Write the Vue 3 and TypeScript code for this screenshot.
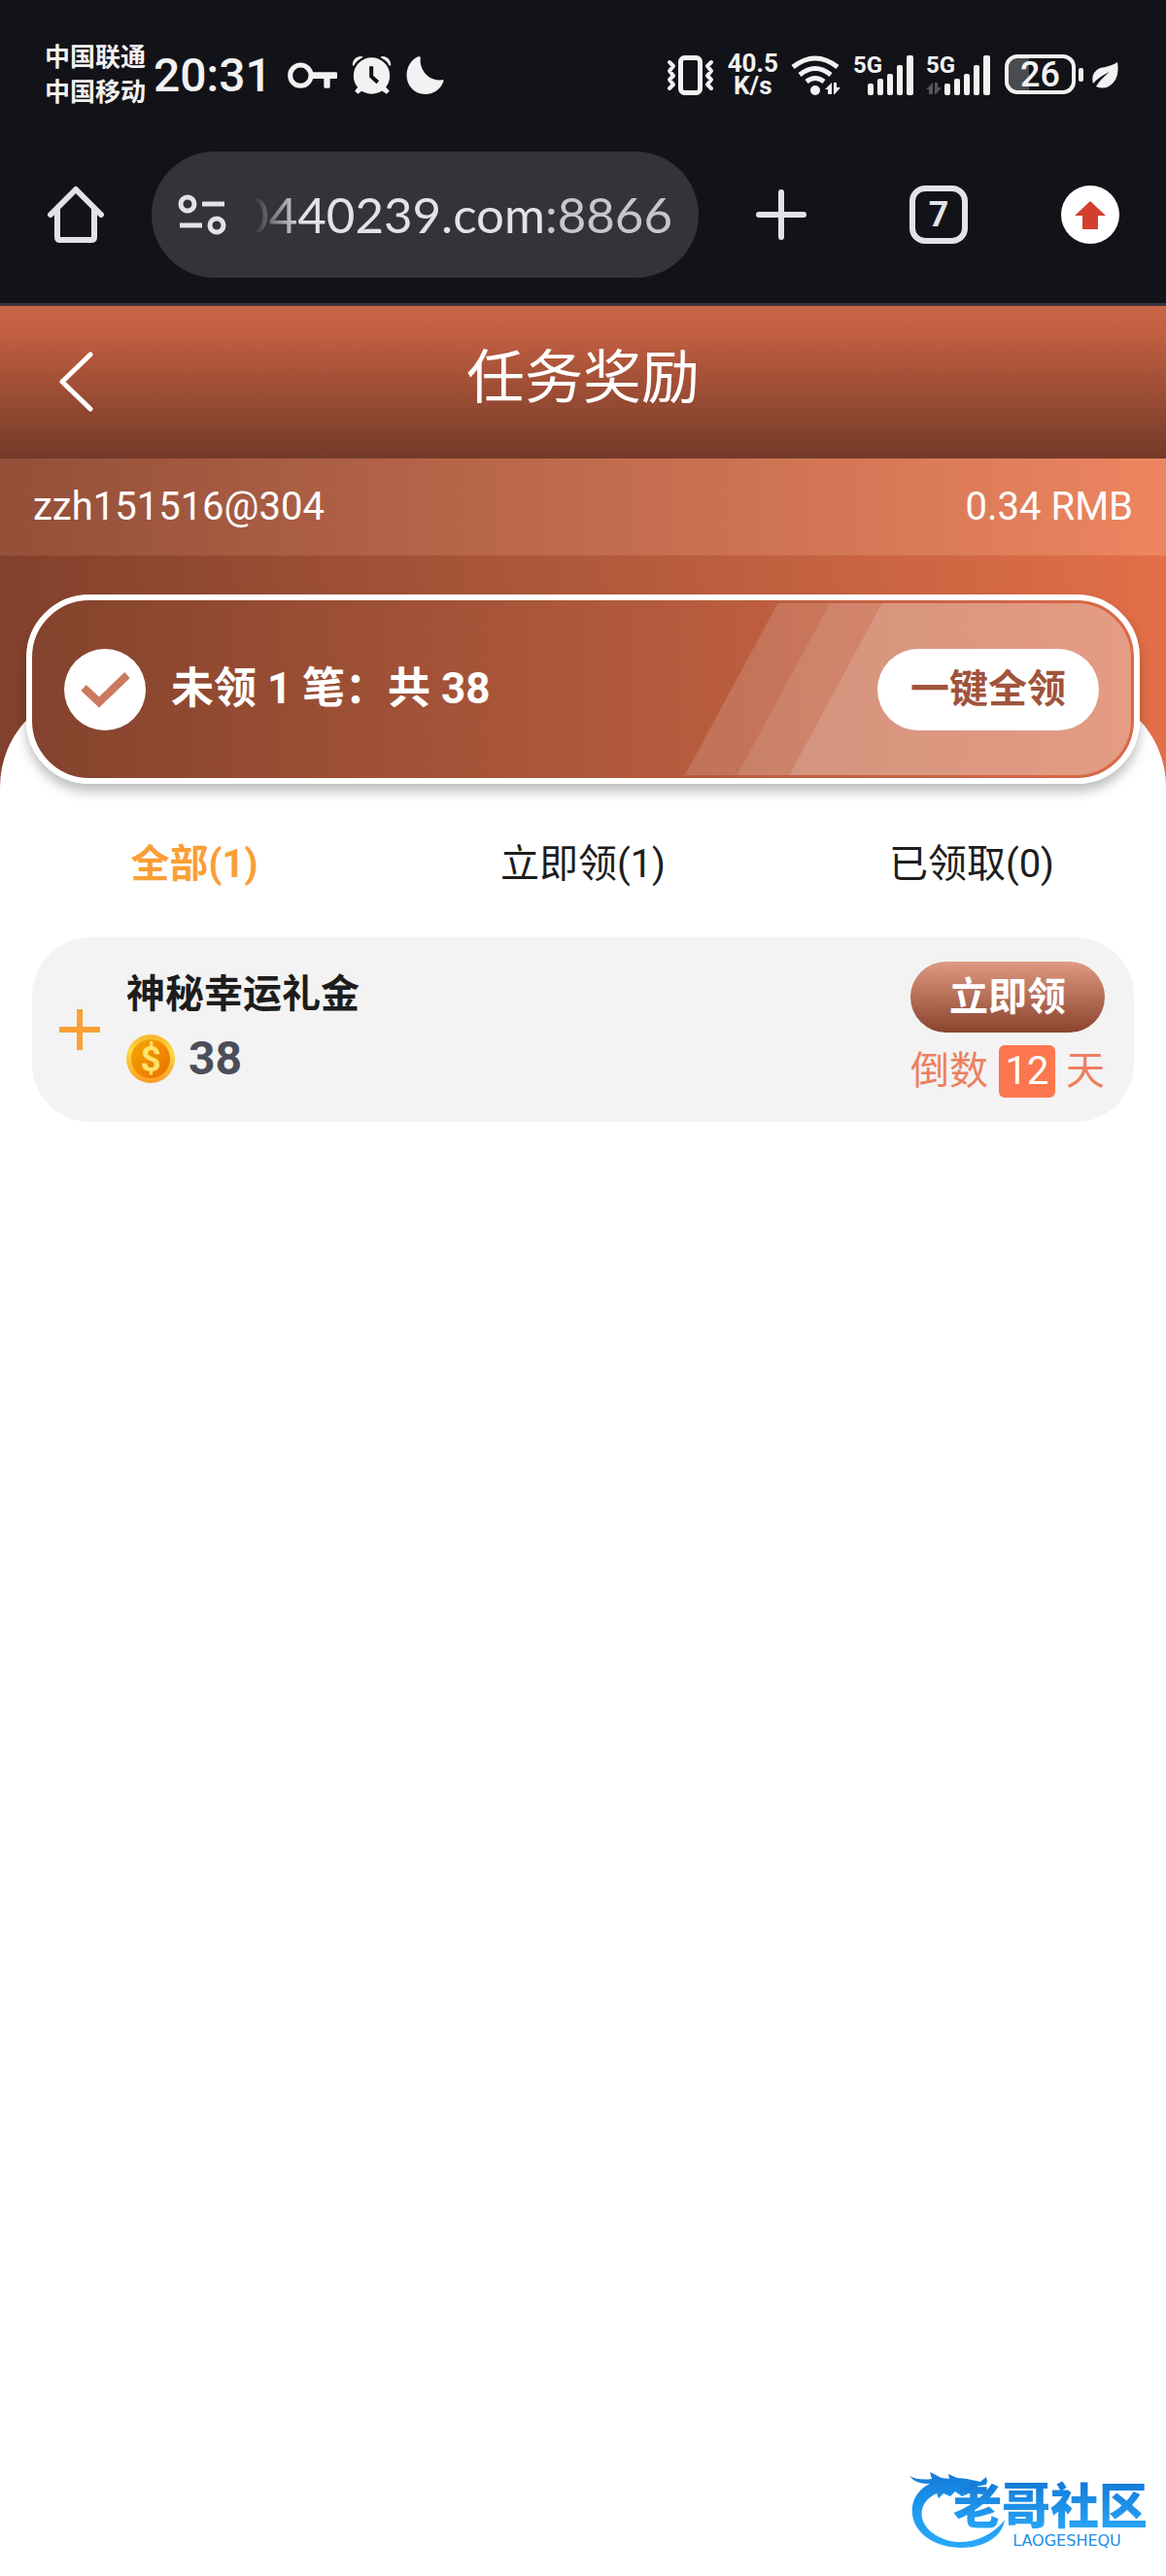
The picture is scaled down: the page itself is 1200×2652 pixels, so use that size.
<script setup lang="ts">
import { ref } from 'vue'

interface Tab {
  key: string
  label: string
  count: number
}

interface Reward {
  id: number
  title: string
  amount: number
  daysLeft: number
}

const tabs: Tab[] = [
  { key: 'all', label: '全部', count: 1 },
  { key: 'open', label: '立即领', count: 1 },
  { key: 'done', label: '已领取', count: 0 },
]
const rewards: Reward[] = [{ id: 1, title: '神秘幸运礼金', amount: 38, daysLeft: 12 }]
const active = ref('all')
</script>

<template>
  <div class="page">
    <header class="chrome">
      <div class="status">
        <div class="carriers">
          <span>中国联通</span>
          <span>中国移动</span>
        </div>
        <time class="clock">20:31</time>
        <svg class="key" width="51" height="27" viewBox="0 0 153 81" fill="currentColor">
          <circle cx="40" cy="41" r="32" fill="none" stroke="currentColor" stroke-width="15" />
          <path d="M76 31H150Q153 31 153 34V48Q153 51 150 51H131V76Q131 80 127 80H116Q112 80 112 76V51H76Z" />
        </svg>
        <svg class="alarm" width="41" height="40" viewBox="0 0 122 120">
          <g fill="currentColor">
            <path d="M2 30A25 25 0 0 1 33 4Q34 7 29 9Q13 17 6 32Q3 33 2 30Z" />
            <path d="M120 30A25 25 0 0 0 89 4Q88 7 93 9Q109 17 116 32Q119 33 120 30Z" />
            <circle cx="61" cy="63" r="56" />
            <path d="M22 92L36 105L19 119L9 110Z" />
            <path d="M100 92L86 105L107 119L116 110Z" />
          </g>
          <path d="M60 34V65L80 83" fill="none" stroke="#121318" stroke-width="12" />
        </svg>
        <svg class="moon" width="39" height="39" viewBox="0 0 117 118" fill="currentColor">
          <path d="M44 5C40 42 70 80 111 73Q118 72 115 80C106 103 84 118 58 118C26 118 1 92 1 60C1 32 16 10 37 1Q45 -1 44 5Z" />
        </svg>

        <div class="indicators">
          <svg width="50" height="41" viewBox="0 0 100 82" fill="none" stroke="currentColor" stroke-linejoin="round" stroke-linecap="round">
            <rect x="29" y="5" width="40" height="72" rx="8" stroke-width="10" />
            <path d="M6 14L14 22L6 32L14 42L6 50L14 60L6 68M92 14L84 22L92 32L84 42L92 50L84 60L92 68" stroke-width="8" />
          </svg>
          <div class="speed"><span>40.5</span><span>K/s</span></div>
          <svg width="51" height="41" viewBox="0 0 51 41">
            <g fill="none" stroke="currentColor" stroke-width="5">
              <path d="M2 12Q25 -6 48 12" />
              <path d="M9 20Q25 7 41 20" />
              <path d="M16 27Q25 20 34 27" />
            </g>
            <g fill="currentColor">
              <circle cx="25" cy="36" r="5" />
              <path d="M42 28V40H38V35H35ZM44 28H47V33H51L45 40H44Z" />
            </g>
          </svg>
          <div class="signal">
            <span>5G</span>
            <svg width="62" height="41" viewBox="0 0 62 41" fill="currentColor">
              <rect x="15" y="29" width="6" height="12" rx="2" />
              <rect x="25" y="24" width="6" height="17" rx="2" />
              <rect x="35" y="19" width="6" height="22" rx="2" />
              <rect x="45" y="10" width="6" height="31" rx="2" />
              <rect x="55" y="0" width="7" height="41" rx="2" />
            </svg>
          </div>
          <div class="signal">
            <span>5G</span>
            <svg width="66" height="41" viewBox="0 0 66 41" fill="currentColor">
              <path d="M7 28V40H3V35H0ZM9 28H12V33H16L10 40H9Z" opacity="0.3" />
              <rect x="19" y="29" width="6" height="12" rx="2" />
              <rect x="29" y="24" width="6" height="17" rx="2" />
              <rect x="39" y="19" width="6" height="22" rx="2" />
              <rect x="49" y="10" width="6" height="31" rx="2" />
              <rect x="59" y="0" width="7" height="41" rx="2" />
            </svg>
          </div>
          <div class="power">
            <div class="battery">
              <svg width="82" height="41" viewBox="0 0 82 41">
                <path d="M14 4H25V37H14Q4 37 4 27V14Q4 4 14 4Z" fill="#4a4b4f" />
                <rect x="2" y="2" width="69" height="37" rx="11" fill="none" stroke="currentColor" stroke-width="4" />
                <rect x="76" y="14" width="5" height="14" rx="2" fill="currentColor" />
              </svg>
              <span>26</span>
            </div>
            <svg width="27" height="27" viewBox="0 0 27 27">
              <path d="M26 0Q29 18 17 25Q11 28 4 25Q8 18 18 10Q7 15 1 22Q-2 11 8 6Q20 4 26 0Z" fill="currentColor" />
            </svg>
          </div>
        </div>
      </div>

      <nav class="toolbar">
        <button class="tool home" aria-label="主页">
          <svg width="60" height="60" viewBox="0 0 60 60" fill="none" stroke="currentColor" stroke-width="6" stroke-linejoin="round" stroke-linecap="round">
            <path d="M4 30L30 4L56 30M11 24V53Q11 56 14 56H46Q49 56 49 53V24" />
          </svg>
        </button>
        <button class="address">
          <svg width="50" height="42" viewBox="0 0 50 42" fill="none" stroke="currentColor" stroke-width="5">
            <circle cx="10" cy="10" r="7" />
            <path d="M25 10H48M2 32H25" />
            <circle cx="40" cy="32" r="7" />
          </svg>
          <span class="url"><span>0440239.com<span class="port">:8866</span></span></span>
        </button>
        <button class="tool add" aria-label="新标签页">
          <svg width="52" height="52" viewBox="0 0 52 52" stroke="currentColor" stroke-width="6" stroke-linecap="round">
            <path d="M26 3V49M3 26H49" />
          </svg>
        </button>
        <button class="tool count">7</button>
        <button class="tool update" aria-label="更新">
          <svg width="60" height="60" viewBox="0 0 60 60">
            <circle cx="30" cy="30" r="30" fill="#fff" />
            <path d="M30 16L46 31H38V45H22V31H14Z" fill="#d23f2f" />
          </svg>
        </button>
      </nav>
    </header>

    <div class="titlebar">
      <button class="tool back" aria-label="返回">
        <svg width="36" height="62" viewBox="0 0 36 62" fill="none" stroke="currentColor" stroke-width="5" stroke-linecap="round" stroke-linejoin="round">
          <path d="M33 3L4 31L33 59" />
        </svg>
      </button>
      <h1>任务奖励</h1>
    </div>

    <section class="hero">
      <div class="account">
        <span>zzh151516@304</span>
        <span>0.34 RMB</span>
      </div>
      <div class="summary">
        <svg class="stripes" viewBox="0 0 462 177" preserveAspectRatio="none">
          <g fill="#fff">
            <path d="M96 0H462V177H0Z" opacity="0.14" />
            <path d="M150 0H462V177H54Z" opacity="0.1" />
            <path d="M204 0H462V177H108Z" opacity="0.14" />
          </g>
        </svg>
        <svg class="tick" width="84" height="84" viewBox="0 0 84 84">
          <circle cx="42" cy="42" r="42" fill="#fff" />
          <path d="M20 40L36 55L65 27" fill="none" stroke="#cb7a60" stroke-width="8" />
        </svg>
        <strong>未领 1 笔：共 38</strong>
        <button class="claim-all">一键全领</button>
      </div>
    </section>

    <main class="panel">
      <div class="tabs">
        <button
          v-for="tab in tabs"
          :key="tab.key"
          :class="{ active: tab.key === active }"
          @click="active = tab.key"
        >{{ tab.label }}({{ tab.count }})</button>
      </div>

      <article v-for="item in rewards" :key="item.id" class="reward">
        <button class="tool expand" aria-label="展开">
          <svg width="42" height="42" viewBox="0 0 42 42" stroke="currentColor" stroke-width="6">
            <path d="M21 0V42M0 21H42" />
          </svg>
        </button>
        <div class="info">
          <h2>{{ item.title }}</h2>
          <p class="amount">
            <svg width="50" height="50" viewBox="0 0 50 50">
              <defs>
                <linearGradient id="rim" x1="0" y1="0" x2="0" y2="1">
                  <stop offset="0" stop-color="#f9b52c" />
                  <stop offset="0.35" stop-color="#fdd945" />
                  <stop offset="1" stop-color="#fb9a23" />
                </linearGradient>
                <linearGradient id="face" x1="0" y1="0" x2="1" y2="1">
                  <stop offset="0" stop-color="#f5a800" />
                  <stop offset="1" stop-color="#ea6f00" />
                </linearGradient>
              </defs>
              <circle cx="25" cy="25" r="25" fill="url(#rim)" />
              <circle cx="25" cy="25" r="20" fill="url(#face)" />
              <text x="25" y="38" text-anchor="middle" font-size="37" font-weight="700" fill="#ffe36b">$</text>
            </svg>
            <span>{{ item.amount }}</span>
          </p>
        </div>
        <div class="action">
          <button class="claim">立即领</button>
          <p class="countdown"><span>倒数</span><b>{{ item.daysLeft }}</b><span>天</span></p>
        </div>
      </article>
    </main>

    <footer class="brand">
      <svg class="dragon" width="110" height="86" viewBox="0 0 110 86">
        <defs>
          <linearGradient id="sky" x1="0" y1="0" x2="0" y2="1">
            <stop offset="0" stop-color="#1479d8" />
            <stop offset="0.5" stop-color="#1c9af0" />
            <stop offset="1" stop-color="#2aa9f8" />
          </linearGradient>
        </defs>
        <path
          fill="url(#sky)"
          d="M1 9Q10 14 24 12L22 5L34 11L42 12L41 7L50 11L60 12L74 15L80 10L81 14L80 18L69 20L79 23L77 28L62 27L55 30L48 25L43 30L36 27L31 32L29 27C6 37 8 65 39 75C62 82 88 70 99 54C97 70 80 83 54 83C20 82 1 62 4 40C6 29 13 21 22 17Q8 18 1 9Z"
        />
      </svg>
      <div class="wordmark">
        <strong>老哥社区</strong>
        <small>LAOGESHEQU</small>
      </div>
    </footer>
  </div>
</template>

<style>
body {
  background: #fff;
}
</style>

<style scoped>
.page {
  display: flex;
  flex-direction: column;
  min-height: 100vh;
  background: #fff;
  color: #1d1d1d;
  font-family: Roboto, 'Noto Sans CJK SC', sans-serif;
  font-size: 40px;
}
.page * {
  box-sizing: border-box;
}
button {
  padding: 0;
  border: 0;
  background: none;
  color: inherit;
  font: inherit;
}
svg {
  display: block;
  flex: none;
}
h1,
h2,
p {
  margin: 0;
}

.chrome {
  border-bottom: 3px solid #3f323a;
  background: #121318;
  color: #f2f2f2;
}
.status {
  display: flex;
  align-items: center;
  height: 154px;
  padding: 0 49px 0 46px;
}
.carriers {
  display: flex;
  flex-direction: column;
  font-size: 26px;
  font-weight: 700;
  line-height: 36px;
}
.clock {
  margin-left: 8px;
  font-size: 48px;
  font-weight: 500;
}
.key {
  margin-left: 16px;
}
.alarm,
.moon {
  margin-left: 15px;
}
.indicators {
  display: flex;
  align-items: center;
  gap: 13px;
  margin-left: auto;
}
.speed {
  display: flex;
  flex-direction: column;
  align-items: center;
  font-size: 26px;
  font-weight: 700;
  line-height: 23px;
}
.signal,
.battery {
  display: grid;
}
.signal > *,
.battery > * {
  grid-area: 1 / 1;
}
.signal span {
  font-size: 24px;
  font-weight: 700;
  line-height: 20px;
}
.power {
  display: flex;
  align-items: center;
  gap: 8px;
  margin-left: 2px;
}
.battery span {
  width: 73px;
  font-size: 36px;
  font-weight: 500;
  line-height: 42px;
  text-align: center;
}

.toolbar {
  display: flex;
  align-items: center;
  height: 158px;
  padding: 2px 48px 26px;
  color: #e3e2e9;
}
.address {
  display: flex;
  flex: 1;
  align-items: center;
  gap: 28px;
  min-width: 0;
  height: 130px;
  margin: 0 59px 0 48px;
  padding: 0 27px;
  border-radius: 65px;
  background: #333438;
}
.url {
  display: flex;
  flex: 1;
  justify-content: flex-end;
  min-width: 0;
  overflow: hidden;
  font-family: Lato, sans-serif;
  font-size: 51px;
  line-height: 64px;
  mask-image: linear-gradient(to right, transparent, #000 50px);
}
.port {
  color: #c5c6d0;
}
.count {
  width: 60px;
  height: 60px;
  margin: 0 96px 0 106px;
  border: 6px solid currentColor;
  border-radius: 16px;
  font-size: 36px;
  font-weight: 700;
  line-height: 46px;
}

.titlebar {
  display: grid;
  grid-template-columns: 1fr auto 1fr;
  align-items: center;
  height: 157px;
  padding: 0 60px 2px;
  background: linear-gradient(#c86747, #c66142 12%, #733a28);
  color: #fff;
}
h1 {
  padding-bottom: 6px;
  font-size: 60px;
  font-weight: 400;
  line-height: 80px;
}

.hero {
  padding-bottom: 3px;
  background: linear-gradient(to right, #82412c, #b0593b 50%, #e26f48);
  color: #fff;
}
.account {
  display: flex;
  align-items: center;
  justify-content: space-between;
  height: 100px;
  padding: 0 34px 2px;
  background: linear-gradient(to right, #934f39, #c06b4d 50%, #ed8560);
}
.summary {
  position: relative;
  z-index: 2;
  display: flex;
  align-items: center;
  height: 195px;
  margin: 40px 27px 0;
  padding: 0 36px 0 33px;
  border: 6px solid #fff;
  border-radius: 65px;
  background: linear-gradient(to right, #84432d, #ae583b 50%, #da6a46);
  box-shadow: 0 8px 12px rgba(0, 0, 0, 0.25);
}
.stripes {
  position: absolute;
  top: 3px;
  right: 3px;
  width: 459px;
  height: 177px;
  border-radius: 0 56px 56px 0;
}
.tick {
  margin-right: 26px;
}
.summary strong {
  padding-bottom: 10px;
  font-size: 44px;
}
.claim-all {
  position: relative;
  width: 228px;
  height: 84px;
  margin-left: auto;
  padding-bottom: 8px;
  border-radius: 42px;
  background: #fff;
  color: #a0543b;
  font-weight: 700;
}

.panel {
  position: relative;
  z-index: 1;
  margin-top: -100px;
  padding: 100px 33px 0;
  border-radius: 100px 100px 0 0;
  background: #fff;
}
.tabs {
  display: grid;
  grid-template-columns: repeat(3, 1fr);
  height: 155px;
  margin: 0 -33px;
}
.tabs button {
  padding-bottom: 4px;
}
.tabs .active {
  color: #f99f36;
  font-weight: 700;
}

.reward {
  display: flex;
  align-items: center;
  height: 190px;
  padding: 0 30px 0 28px;
  border-radius: 60px;
  background: #f3f3f3;
}
.expand {
  color: #f9a034;
}
.info {
  margin-left: 27px;
}
h2 {
  font-size: 40px;
  line-height: 60px;
}
.amount {
  display: flex;
  align-items: center;
  gap: 14px;
  color: #4a4e59;
  font-size: 48px;
  font-weight: 700;
  line-height: 72px;
}
.action {
  margin-left: auto;
}
.claim {
  display: block;
  width: 200px;
  height: 73px;
  padding-bottom: 8px;
  border-radius: 37px;
  background: linear-gradient(#df9a83, #8a432e);
  color: #fff;
  font-weight: 700;
}
.countdown {
  display: flex;
  align-items: center;
  justify-content: space-between;
  height: 54px;
  margin-top: 13px;
  color: #ee7f5f;
}
.countdown span {
  padding-bottom: 8px;
}
.countdown b {
  width: 58px;
  border-radius: 6px;
  background: #fc774f;
  color: #fff;
  font-weight: 400;
  line-height: 54px;
  text-align: center;
}

.brand {
  display: flex;
  justify-content: flex-end;
  margin-top: auto;
  padding: 0 19px 26px 0;
  color: #1b8fe8;
}
.wordmark {
  display: flex;
  flex-direction: column;
  margin: 14px 0 0 -64px;
}
.wordmark strong {
  background: linear-gradient(#1479d8, #2aa9f8);
  background-clip: text;
  color: transparent;
  font-size: 50px;
  font-weight: 900;
  line-height: 54px;
}
.wordmark small {
  align-self: center;
  margin-left: 34px;
  font-family: 'DejaVu Sans', sans-serif;
  font-size: 16px;
  line-height: 16px;
}
</style>
